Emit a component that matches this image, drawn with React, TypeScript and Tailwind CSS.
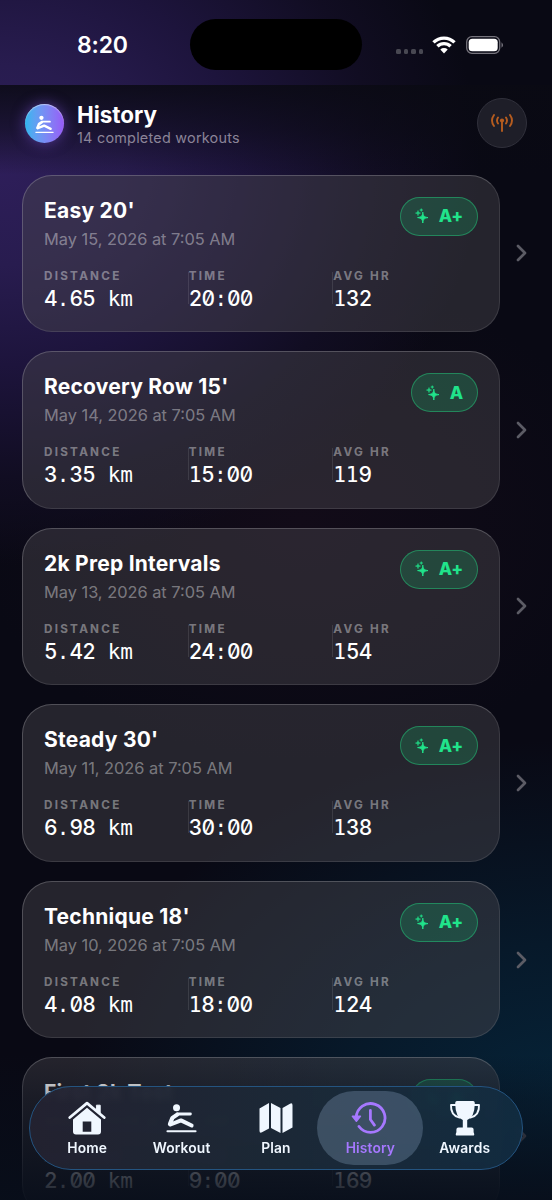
import React from "react";

type Workout = { title: string; date: string; distance: string; time: string; hr: string; grade: string };

const WORKOUTS: Workout[] = [
  { title: "Easy 20'", date: "May 15, 2026 at 7:05 AM", distance: "4.65 km", time: "20:00", hr: "132", grade: "A+" },
  { title: "Recovery Row 15'", date: "May 14, 2026 at 7:05 AM", distance: "3.35 km", time: "15:00", hr: "119", grade: "A" },
  { title: "2k Prep Intervals", date: "May 13, 2026 at 7:05 AM", distance: "5.42 km", time: "24:00", hr: "154", grade: "A+" },
  { title: "Steady 30'", date: "May 11, 2026 at 7:05 AM", distance: "6.98 km", time: "30:00", hr: "138", grade: "A+" },
  { title: "Technique 18'", date: "May 10, 2026 at 7:05 AM", distance: "4.08 km", time: "18:00", hr: "124", grade: "A+" },
  { title: "First 2k Test", date: "May 8, 2026 at 7:05 AM", distance: "2.00 km", time: "9:00", hr: "169", grade: "A" },
];

function Rower({ className }: { className: string }) {
  return (
    <svg viewBox="0 0 30 30" className={className} fill="none" stroke="currentColor" strokeLinecap="round" strokeLinejoin="round">
      <circle cx="10.2" cy="4.5" r="3.4" fill="currentColor" stroke="none" />
      <path d="M23.6 10.6H11" strokeWidth="2.8" />
      <path d="M10.8 11.2 6.2 14.4 3.8 20.4" strokeWidth="4" />
      <path d="M4.4 20.8 14.5 16.8 24.8 21.8" strokeWidth="3.8" />
      <path d="M1.4 27.4H28.6" strokeWidth="2" />
    </svg>
  );
}

function Sparkles() {
  return (
    <svg viewBox="0 0 14 16" className="h-4 w-3.5" fill="currentColor">
      <path d="M7.8 4.2C8.2 8 9 9 13 9.6 9 10.2 8.2 11.2 7.8 15 7.4 11.2 6.6 10.2 2.6 9.6 6.6 9 7.4 8 7.8 4.2Z" stroke="currentColor" strokeWidth="1" />
      <path d="M3 2.6C3.2 4.6 3.5 4.8 5.5 5.1 3.5 5.4 3.2 5.6 3 7.6 2.8 5.6 2.5 5.4.5 5.1 2.5 4.8 2.8 4.6 3 2.6Z" stroke="currentColor" strokeWidth=".6" />
      <path d="M6.2.4 6.7 1.6 7.9 2 6.7 2.5 6.2 3.7 5.8 2.5 4.6 2 5.8 1.6Z" stroke="currentColor" strokeWidth=".3" />
    </svg>
  );
}

/* Fixed-pitch value: tabular digits with slashed zeros, other glyphs from the mono face. */
function MonoValue({ text }: { text: string }) {
  return (
    <div className="mt-[2px] h-7 whitespace-pre font-['Inter'] text-[21px] leading-7 font-medium text-white">
      {text.split(/([02-9]+)/).filter(Boolean).map((run, i) =>
        /[02-9]/.test(run) ? (
          <span key={i} className="tracking-[-0.75px] [font-feature-settings:'tnum','zero']">{run}</span>
        ) : (
          <span key={i} className="font-['DejaVu_Sans_Mono'] tracking-[-0.12px]">{run}</span>
        ),
      )}
    </div>
  );
}

function Stat({ label, value, first }: { label: string; value: string; first?: boolean }) {
  return (
    <div className="relative w-[145px]">
      {!first && <i className="absolute top-[3px] -left-px h-8 w-px bg-white/10" />}
      <div className="text-[11.7px] leading-[14px] font-bold tracking-[2.25px] text-white/40">{label}</div>
      <MonoValue text={value} />
    </div>
  );
}

function Row({ w }: { w: Workout }) {
  return (
    <div className="flex items-center">
      <article className="h-[157.6px] w-[478px] shrink-0 rounded-[30px] border border-t-white/20 border-r-white/10 border-b-white/10 border-l-white/20 bg-[#48464c75] px-[21px] pt-[21px]">
        <div className="flex justify-between">
          <div>
            <h2 className="h-7 text-[21px] leading-7 font-bold tracking-[0.24px] text-white">{w.title}</h2>
            <p className="h-[28px] text-[16.35px] leading-[28px] text-white/40">{w.date}</p>
          </div>
          <div className="flex h-[39px] items-center gap-2.5 rounded-full border-[1.3px] border-[#24d88370] bg-[#16d97b30] px-[14px] text-[#20e48b]">
            <Sparkles />
            <span className="text-[17.4px] font-extrabold tracking-[-0.2px]">{w.grade}</span>
          </div>
        </div>
        <div className="mt-[16px] flex">
          <Stat first label="DISTANCE" value={w.distance} />
          <Stat label="TIME" value={w.time} />
          <Stat label="AVG HR" value={w.hr} />
        </div>
      </article>
      <svg viewBox="0 0 10 18" className="ml-4 h-[18px] w-[11px]" fill="none" stroke="#5c5c65" strokeWidth="2.7" strokeLinecap="round" strokeLinejoin="round">
        <path d="m1.5 2 7 7-7 7" />
      </svg>
    </div>
  );
}

function Tab({ label, active, children }: { label: string; active?: boolean; children: React.ReactNode }) {
  return (
    <div className={active ? "-mx-[5.8px] flex h-[74px] w-[106px] flex-col items-center rounded-full bg-[#8faac74d] pt-[9px] text-[#a678ff]" : "flex h-[74px] w-[94.4px] flex-col items-center pt-[9px] text-[#f0f7ff]"}>
      <div className="flex h-9 items-center justify-center">{children}</div>
      <span className="mt-[3px] text-[13.8px] leading-[18px] font-semibold tracking-[0.15px]">{label}</span>
    </div>
  );
}

export default function App() {
  return (
    <main className="relative flex h-[1200px] w-[552px] flex-col overflow-hidden bg-[#090914] bg-[radial-gradient(ellipse_480px_400px_at_0px_165px,#2e1e5a_0%,#281c4f_25%,#1d143c_50%,#110d22_78%,transparent_100%),radial-gradient(ellipse_500px_370px_at_570px_1110px,#062439_0%,#07192a_45%,transparent_100%),radial-gradient(ellipse_330px_240px_at_300px_520px,#120b18_0%,transparent_100%)] font-['Inter',sans-serif]">
      <header className="flex h-[85px] shrink-0 items-center">
        <div className="ml-[77px] w-[113px] pt-[6px] text-[23px] font-semibold tracking-[-0.2px] text-white">8:20</div>
        <div className="mt-1 h-[51px] w-[172px] rounded-full bg-black" />
        <div className="mt-[18px] ml-[34px] flex gap-[3px]">
          {[0, 1, 2, 3].map((i) => <i key={i} className="size-[4.5px] rounded-[1.5px] bg-[#484852]" />)}
        </div>
        <svg viewBox="0 0 24 18" className="mt-1 ml-[9px] h-[18px] w-6" fill="none" stroke="white" strokeWidth="3.4">
          <path d="M1.5 6.4a15 15 0 0 1 21 0M5.4 10.3a9.4 9.4 0 0 1 13.2 0" />
          <path d="M8.3 13.5a5.5 5.5 0 0 1 7.4 0L12 17.5Z" fill="white" stroke="none" />
        </svg>
        <svg viewBox="0 0 38 18" className="mt-1 ml-2.5 h-[18px] w-[38px]">
          <rect x=".7" y=".7" width="33" height="16.6" rx="5.2" fill="none" stroke="#76747d" strokeWidth="1.3" />
          <rect x="2.7" y="2.7" width="29" height="12.6" rx="3.6" fill="white" />
          <path d="M35.5 6.2q3.2 2.8 0 5.6Z" fill="#76747d" />
        </svg>
      </header>

      <section className="flex h-[89.5px] shrink-0 items-start bg-linear-to-b from-[#0a0a13d9] via-[#0a0a1380] to-transparent">
        <div className="mt-[19px] ml-[25px] flex size-[39px] items-center justify-center rounded-full bg-linear-to-r from-[#28b6ef] to-[#965af7] text-white shadow-[0_0_14px_#8b5cf680,inset_0_1px_1px_#ffffff80]">
          <Rower className="mt-0.5 size-[19px]" />
        </div>
        <div className="mt-[16px] ml-[13px] grow">
          <h1 className="text-[22.4px] leading-7 font-bold text-white">History</h1>
          <p className="text-[14.4px] leading-[17px] tracking-[0.24px] text-[#8b8498]">14 completed workouts</p>
        </div>
        <div className="mt-[13px] mr-[25px] flex size-[50px] items-center justify-center rounded-full border border-[#30303b] bg-[#1e1e28]">
          <svg viewBox="0 0 24 20" className="h-5 w-6" fill="none" stroke="#b55c1f" strokeWidth="1.9" strokeLinecap="round">
            <circle cx="12" cy="7.5" r="2.1" fill="#b55c1f" stroke="none" />
            <path d="M12 8v10M8 4.5q-2 3 0 6M16 4.5q2 3 0 6M4 2q-4 5.5 0 11M20 2q4 5.5 0 11" />
          </svg>
        </div>
      </section>

      <div className="ml-[22px] flex flex-col gap-[19px]">
        {WORKOUTS.map((w) => <Row key={w.date} w={w} />)}
      </div>

      <div className="absolute inset-x-0 bottom-0 h-[145px] bg-linear-to-b from-transparent via-[#080e1a60] via-30% to-[#080e1aeb]" />

      <nav className="absolute top-[1086px] left-[29px] flex h-[84px] w-[494px] items-center rounded-full border-[1.3px] border-[#245480] bg-linear-to-r from-[#232231f2] via-[#1c2937f2] to-[#122d42e8] px-[10px] backdrop-blur-[3px]">
        <Tab label="Home">
          <svg viewBox="0 0 38 36" className="h-9 w-[38px]" fill="none" stroke="currentColor" strokeLinecap="round" strokeLinejoin="round">
            <path d="M1.8 17.5 19 3.1 36.2 17.5" strokeWidth="2.8" />
            <path d="M28.8 5.2h3.4v8l-3.4-2.8Z" fill="currentColor" strokeWidth="1" />
            <path fillRule="evenodd" d="M19 7.8 33 19.6V31.4q0 3-3 3H8q-3 0-3-3V19.6ZM14.7 21.6v10.2h8.6V21.6Z" fill="currentColor" stroke="none" />
          </svg>
        </Tab>
        <Tab label="Workout"><Rower className="size-[31px]" /></Tab>
        <Tab label="Plan">
          <svg viewBox="0 0 34 32" className="h-8 w-[34px]" fill="currentColor">
            <path d="M.5 6.5 10 1v25.5L3 30.3Q.5 31.5.5 28.8ZM12 1l9.5 5v25L12 26ZM23.5 6 31 1.7Q33.5.5 33.5 3.2v22.2L23.5 31Z" />
          </svg>
        </Tab>
        <Tab label="History" active>
          <svg viewBox="0 0 36 34" className="mr-[3px] h-[34px] w-9" fill="none" stroke="currentColor" strokeLinecap="round" strokeLinejoin="round">
            <path d="M5.2 16.6A14.4 14.4 0 1 1 8 25.5M19.4 9.5v9l4 5.6" strokeWidth="2.8" />
            <path d="M1.4 15.3h8L5.4 20.3Z" fill="currentColor" strokeWidth="1.5" />
          </svg>
        </Tab>
        <Tab label="Awards">
          <svg viewBox="0 0 32 36" className="h-9 w-8" fill="currentColor">
            <path d="M8 1h16q2 0 1.8 3-.3 13.5-7.6 16v7.4h4.4q2 0 2 2v3h.2q1.3 3.2-1 3.2H8.2q-2.3 0-1-3.2h.2v-3q0-2 2-2h4.4V20Q6.5 17.5 6.2 4 6 1 8 1Z" />
            <path d="M7 5H2q-.5 10.6 8.6 12.6M25 5h5q.5 10.6-8.6 12.6" fill="none" stroke="currentColor" strokeWidth="1.9" strokeLinecap="round" strokeLinejoin="round" />
          </svg>
        </Tab>
      </nav>
    </main>
  );
}
